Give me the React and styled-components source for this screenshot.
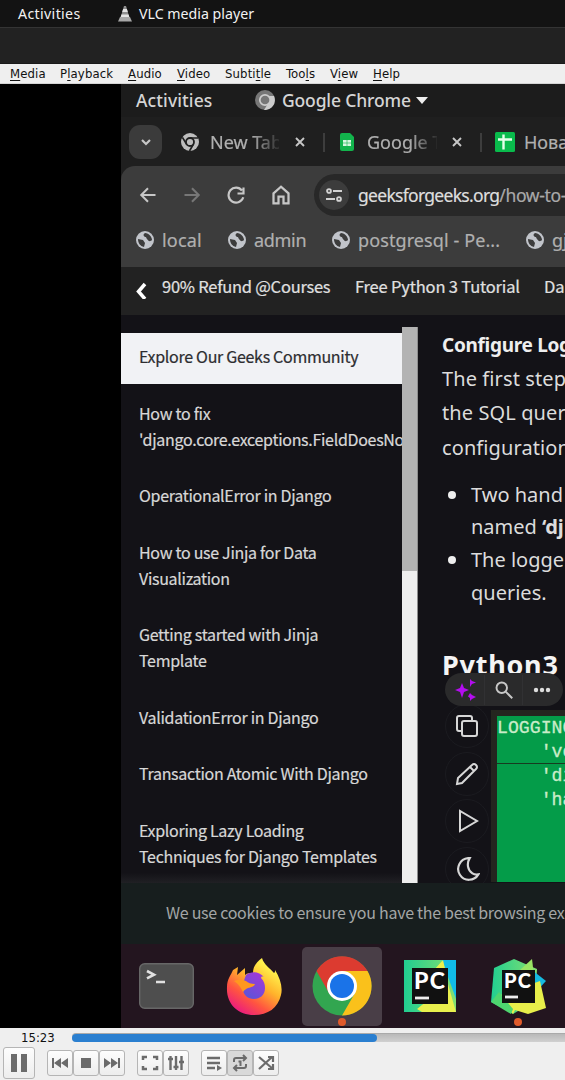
import React from "react";
import styled, { createGlobalStyle } from "styled-components";

const Global = createGlobalStyle`
  *{box-sizing:border-box}
  html,body{margin:0;padding:0;background:#000;overflow:hidden}
  svg{display:block;flex:none}
`;

const ui = '"Noto Sans", sans-serif';
const source = '"Noto Sans CJK SC", "Open Sans", sans-serif';

const Window = styled.div`width:565px;height:1080px;display:flex;flex-direction:column;overflow:hidden;font-family:${ui};white-space:nowrap;`;
const Label = styled.span`
  display:block;flex:none;width:${p => p.$w ? p.$w + "px" : "auto"};
  font-size:${p => p.$size || 14}px;letter-spacing:${p => p.$ls || 0}px;
  color:${p => p.$color || "inherit"};font-weight:${p => p.$weight || 400};
`;
const Spacer = styled.div`flex:none;width:${p => p.$w}px;`;

const DesktopBar = styled.header`flex:none;height:28px;background:#131313;border-bottom:1px solid #343434;color:#f2f2f2;display:flex;align-items:center;padding-left:18px;`;
const TitleBar = styled.div`flex:none;height:36px;background:#222;border-bottom:1px solid #1a1a1a;`;
const MenuBar = styled.nav`flex:none;height:20px;background:#efefef;border-bottom:1px solid #d4d4d4;display:flex;align-items:center;padding-left:10px;color:#111;font-family:"DejaVu Sans Condensed","DejaVu Sans",sans-serif;font-stretch:condensed;`;
const MenuItem = styled.span`flex:none;width:${p => p.$w}px;font-size:13px;line-height:18px;letter-spacing:.12px;u{text-underline-offset:2px;}`;

const Stage = styled.main`flex:none;height:944px;display:flex;background:#000;`;
const Letterbox = styled.div`flex:none;width:121px;`;
const Video = styled.div`flex:none;width:444px;overflow:hidden;display:flex;flex-direction:column;background:#1c1c1c;`;

const ShellBar = styled.div`flex:none;height:33px;display:flex;align-items:center;padding:0 0 1px 15px;color:#d5d5d5;`;
const TabStrip = styled.div`flex:none;height:49px;display:flex;align-items:center;padding:1px 0 0 8px;color:#b0b0b0;background:#1f1f1f;`;
const TabSearch = styled.div`width:33px;height:34px;border-radius:11px;background:#3b3b3b;display:grid;place-items:center;flex:none;`;
const TabTitle = styled(Label)`overflow:hidden;margin-top:-1px;-webkit-text-stroke:.2px currentColor;mask-image:${p => p.$fade ? "linear-gradient(90deg,#000 60%,transparent 105%)" : "none"};`;
const Divider = styled.div`flex:none;width:2px;height:19px;background:#3d3d3d;`;
const BrowserHead = styled.div`flex:none;background:#1f1f1f;`;
const BrowserTools = styled.div`height:101px;background:#3c3c3c;border-radius:14px 0 0 0;`;
const AddressRow = styled.div`height:57px;display:flex;align-items:center;padding-left:18px;`;
const Omnibox = styled.div`flex:none;width:270px;height:42px;border-radius:21px 0 0 21px;background:#282828;display:flex;align-items:center;padding-left:5px;-webkit-text-stroke:.2px currentColor;`;
const SiteInfo = styled.div`flex:none;width:30px;height:30px;border-radius:15px;background:#3c3c3c;display:grid;place-items:center;margin-right:9px;`;
const Bookmarks = styled.div`height:34px;display:flex;align-items:center;padding-left:15px;color:#b0b0b0;-webkit-text-stroke:.2px currentColor;`;

const SiteNav = styled.div`flex:none;height:48px;background:#222;display:flex;align-items:center;padding:0 0 10px 15px;font-family:${source};color:#e0e0e0;-webkit-text-stroke:.2px currentColor;`;
const Page = styled.div`flex:none;height:568px;display:flex;background:#131217;overflow:hidden;`;
const Sidebar = styled.aside`flex:none;width:281px;padding-top:18px;overflow:hidden;font-family:${source};background:linear-gradient(180deg,transparent 98.2%,#202024 100%);`;
const Topic = styled.div`
  padding:${p => p.$active ? "10px 0 15px 18px" : "0 0 0 18px"};
  margin-bottom:${p => p.$active ? 15.5 : 30.5}px;
  background:${p => p.$active ? "#f1f2f5" : "transparent"};
  color:${p => p.$active ? "#2d2d30" : "#d8d8d8"};
  font-size:16px;line-height:26px;letter-spacing:-.3px;
  -webkit-text-stroke:.2px currentColor;
`;
const Track = styled.div`flex:none;width:16px;height:556px;margin-top:12px;background:#eee;border-right:1px solid #8d8d8d;`;
const Thumb = styled.div`height:244px;background:#b3b3b3;`;
const Article = styled.section`flex:none;width:147px;padding:13px 0 0 24px;color:#dcdcdc;`;
const Heading = styled.h4`margin:0;height:34px;line-height:34px;font-size:19px;font-weight:700;letter-spacing:-.3px;color:#eee;`;
const Paragraph = styled.p`margin:0;font-size:20px;line-height:34.3px;letter-spacing:.1px;`;
const List = styled.ul`margin:14px 0 0;padding:0 0 0 29px;font-size:20px;line-height:32.6px;letter-spacing:0;list-style:none;`;
const ListItem = styled.li`display:flex;flex-direction:column;`;
const BulletLine = styled.span`display:flex;align-items:center;&::before{content:"";flex:none;width:8px;height:8px;border-radius:4px;background:#eee;margin:0 15px 0 -23px;}`;
const Snippet = styled.div`position:relative;margin-top:35px;`;
const Language = styled.h3`margin:0;height:44px;line-height:42px;font-size:27px;font-weight:700;letter-spacing:.75px;color:#f4f4f4;`;
const Floating = styled.div`position:absolute;left:3px;top:29px;width:118px;height:33px;border-radius:17px;background:#2a2a2b;display:flex;align-items:center;z-index:2;`;
const FloatAction = styled.div`width:38px;height:30px;display:grid;place-items:center;border-right:1px solid #313133;&:first-child{width:40px}&:last-child{border:0}`;
const CodeArea = styled.div`display:flex;height:200px;margin-top:27px;`;
const CodeTools = styled.div`flex:none;width:49px;padding-left:3px;margin-top:-11px;display:flex;flex-direction:column;gap:3.6px;`;
const CodeTool = styled.div`flex:none;width:44px;height:44px;border-radius:22px;border:1px solid #1b1b20;display:grid;place-items:center;`;
const CodeFrame = styled.div`flex:none;width:76px;height:172px;border:6px solid #24251f;border-right:0;border-bottom:0;margin-top:-5px;`;
const Code = styled.div`height:166px;background:#049c49;color:#c9ecc8;font:18.2px/24px "Liberation Mono",monospace;overflow:hidden;white-space:pre;-webkit-text-stroke:.3px currentColor;`;
const CodeLine = styled.div`height:24px;border-bottom:${p => p.$rule ? "1px solid #173b20" : "0"};`;

const Cookies = styled.div`flex:none;height:61px;background:#171e1e;color:#a3a6a6;display:flex;align-items:center;padding:0 0 3px 45px;font-family:${source};`;
const Dock = styled.div`flex:none;height:84px;background:#23151f;display:flex;align-items:center;`;
const DockItem = styled.div`position:relative;flex:none;width:80px;height:79px;margin-right:8px;display:grid;place-items:center;border-radius:5px;background:${p => p.$active ? "#493e47" : "transparent"};`;
const RunningDot = styled.i`position:absolute;left:36px;bottom:0;width:8px;height:8px;border-radius:4px;background:#e05a2b;`;

const Controls = styled.footer`flex:none;height:52px;background:#efefef;color:#111;`;
const SeekRow = styled.div`height:18px;display:flex;align-items:center;padding-left:21px;font-family:"DejaVu Sans Condensed","DejaVu Sans",sans-serif;font-stretch:condensed;`;
const Seek = styled.div`width:520px;height:9px;background:linear-gradient(#b9b9b9,#d0d0d0);border-top:1px solid #aaa;border-radius:4px 0 0 4px;`;
const Played = styled.div`width:305px;height:8px;background:#2a7fd0;border-radius:4px;`;
const ButtonRow = styled.div`height:34px;display:flex;align-items:center;padding:0 0 1px 3px;`;
const Group = styled.div`display:flex;gap:0;margin-left:12px;`;
const Button = styled.button`flex:none;width:${p => p.$large ? 32 : 26}px;height:${p => p.$large ? 32 : 26}px;padding:0;border:1px solid #b5b5b5;border-radius:3px;background:${p => p.$pressed ? "#d9d9d9" : "linear-gradient(#fdfdfd,#ededed)"};display:grid;place-items:center;`;

const Stroke = ({ size = 20, color = "#c7c7c7", w = 2, d, vb = 24, fill = "none" }) => (
  <svg width={size} height={size} viewBox={`0 0 ${vb} ${vb}`} fill={fill} stroke={color} strokeWidth={w}><path d={d} /></svg>
);
const Cone = () => <svg width="14" height="16" viewBox="0 0 14 16"><path d="M6 0h2l3.6 12H2.4z" fill="#8f8f8f"/><path d="M5.1 3h3.8l.9 3H4.2zM3.4 8.6h7.2l.7 2.4H2.7z" fill="#e4e4e4"/><path d="M2 11h10l2 4.5H0z" fill="#a8a8a8"/></svg>;
const GrayChrome = () => <svg width="20" height="20" viewBox="0 0 20 20"><circle cx="10" cy="10" r="10" fill="#777"/><path d="M10 6h9a10 10 0 0 1-10 14l5-8z" fill="#ccc"/><circle cx="10" cy="10" r="5.2" fill="#777" stroke="#ccc" strokeWidth="1.7"/></svg>;
const TabChrome = () => <svg width="18" height="18" viewBox="0 0 18 18"><circle cx="9" cy="9" r="9" fill="#bebebe"/><path d="M9 5h8M5.5 11L1.4 4.4M12.5 11L8.5 18" stroke="#202020" strokeWidth="1.7"/><circle cx="9" cy="9" r="4" fill="#bebebe" stroke="#202020" strokeWidth="1.8"/></svg>;
const Globe = () => <svg width="18" height="18" viewBox="0 0 18 18"><circle cx="9" cy="9" r="9" fill="#c1c4ca"/><path d="M2 8l5 1 2 3-1 4C4 15 2 12 2 8zM9 2c-2 1-2 3 0 4 2 0 1 2 3 3 1 2 3 1 4 0 0-3-3-7-7-7z" fill="#3c3c3c"/></svg>;
const Close = () => <Stroke size={12} vb={12} w={1.9} d="M2 2l8 8M10 2L2 10" />;
const Sheets = () => <svg width="14" height="18" viewBox="0 0 14 18"><path d="M0 2a2 2 0 0 1 2-2h8l4 4v12a2 2 0 0 1-2 2H2a2 2 0 0 1-2-2z" fill="#12b44c"/><path d="M3 7h8v6H3z" fill="#d5f7df"/><path d="M3 10h8M7 7v6" stroke="#12b44c" strokeWidth=".6"/></svg>;
const GreenTable = () => <svg width="20" height="20" viewBox="0 0 20 20"><rect width="20" height="20" rx="1.5" fill="#09bb4c"/><path d="M8.5 2.5v15M3 7.5h14" stroke="#e4ffe9" strokeWidth="2.4"/></svg>;
const Tune = () => <svg width="16" height="16" viewBox="0 0 16 16" fill="none" stroke="#d2d2d2" strokeWidth="1.9"><circle cx="3" cy="4" r="1.9"/><circle cx="13" cy="12" r="1.9"/><path d="M7 4h9M0 12h9"/></svg>;

const Terminal = () => <svg width="55" height="46" viewBox="0 0 55 46"><rect x=".7" y=".7" width="53.6" height="44.6" rx="5" fill="#4e4e4e" stroke="#676767" strokeWidth="1.4"/><path d="M8 8l7 3.7L8 15.4M17 19h9" fill="none" stroke="#e1e1e1" strokeWidth="2.6"/></svg>;
const Firefox = () => (
  <svg width="56" height="59" viewBox="0 0 56 59">
    <defs>
      <linearGradient id="ff" x1=".85" y1=".1" x2=".25" y2="1"><stop offset=".1" stopColor="#fff04b"/><stop offset=".4" stopColor="#ffb32b"/><stop offset=".7" stopColor="#ff5540"/><stop offset="1" stopColor="#e91784"/></linearGradient>
      <linearGradient id="pu" x1=".8" y1="0" x2=".2" y2="1"><stop stopColor="#a437d8"/><stop offset="1" stopColor="#5a55d8"/></linearGradient>
    </defs>
    <path d="M36 1c2 7 8 10 12 15 1-1 1-1 1-3 5 8 8 17 6 25C52 51 42 58 28 58 12 58 0 47 1 30c0-8 4-12 6-17l5-3-1 8 8-7v7c2-2 5-2 8-2 0-7 4-11 9-15z" fill="url(#ff)"/>
    <path d="M20 18c5-4 13-4 18 2-2-1-3 0-3 1 3 3 4 6 4 10 0 7-5 11-11 11S17 38 17 32c0-5 1-9 3-14z" fill="url(#pu)"/>
    <path d="M8 24c4-2 8-2 12 0 2 2 5 3 9 3-1 3-4 3-7 4-2 1-4 2-5 4-2-4-4-8-9-11z" fill="#ff981f"/>
  </svg>
);
const Chrome = () => <svg width="60" height="60" viewBox="0 0 60 60"><circle cx="30" cy="30" r="29.5" fill="#32a650"/><path d="M4.5 15A29.5 29.5 0 0 1 55.5 15H30L17 37z" fill="#dc3b30"/><path d="M30 15h25.5A29.5 29.5 0 0 1 30 59.5L43 37z" fill="#fac11b"/><circle cx="30" cy="30" r="15" fill="#fff"/><circle cx="30" cy="30" r="12" fill="#1a73e8"/></svg>;
const PcText = styled.text`font-family:Lato,sans-serif;font-weight:900;fill:#fff;`;
const PyCharm = ({ community }) => (
  <svg width="56" height="56" viewBox="0 0 56 56">
    <defs><linearGradient id="gr" x1="0" x2="1"><stop stopColor="#21ce91"/><stop offset="1" stopColor="#83df70"/></linearGradient></defs>
    {community ? <>
      <path d="M4 10L24 1l23 10-2 32-22 13L1 44z" fill="url(#gr)"/><path d="M30 12L42 1l3 25z" fill="#9ae564"/><path d="M42 12l14 11-13 14z" fill="#15b9df"/><path d="M8 38l42-15 6 27-18 6-13-4-2 4z" fill="#e8ef4a"/><path d="M1 44l8-10 14 17-2 5z" fill="#4ed66f"/>
    </> : <>
      <path d="M2 2h52v52H2z" fill="url(#gr)"/><path d="M40 2h14v39z" fill="#11bce8"/><path d="M32 12l9-10 4 17zM15 51l31-25 8 28H20z" fill="#e9f04d"/>
    </>}
    <rect x={community ? 12 : 10} y={community ? 12 : 10} width={community ? 33 : 36} height={community ? 33 : 36} fill="#111"/>
    <PcText x={community ? 14 : 12} y={community ? 30 : 31} fontSize={community ? 20 : 23} textLength={community ? 27 : 31}>PC</PcText>
    <path d={community ? "M15 39h13" : "M13 40h14"} stroke="#eee" strokeWidth="2.8"/>
  </svg>
);

const menu = [["", "M", "edia", 50], ["P", "l", "ayback", 68], ["", "A", "udio", 49], ["", "V", "ideo", 48], ["Subti", "t", "le", 61], ["Too", "l", "s", 44], ["V", "i", "ew", 43], ["", "H", "elp", 40]];
const topics = [["How to fix", "'django.core.exceptions.FieldDoesNo"], ["OperationalError in Django"], ["How to use Jinja for Data", "Visualization"], ["Getting started with Jinja", "Template"], ["ValidationError in Django"], ["Transaction Atomic With Django"], ["Exploring Lazy Loading", "Techniques for Django Templates"]];

const C = ({ d, size = 18, w = 2.5, fill = "none" }) => <Stroke size={size} vb={18} color="#6b6b6b" w={w} d={d} fill={fill} />;

export default function App() {
  return (
    <Window>
      <Global />
      <DesktopBar><Label $w={100} $size={14.2} $ls={.35}>Activities</Label><Cone /><Spacer $w={7} /><Label $size={14.2}>VLC media player</Label></DesktopBar>
      <TitleBar />
      <MenuBar>{menu.map(([a, b, c, w]) => <MenuItem key={a + b + c} $w={w}>{a}<u>{b}</u>{c}</MenuItem>)}</MenuBar>
      <Stage>
        <Letterbox />
        <Video>
          <ShellBar><Label $w={119} $size={17.5} $ls={.1} $weight={500}>Activities</Label><GrayChrome /><Spacer $w={7} /><Label $w={134} $size={17.5} $ls={-.15} $weight={500}>Google Chrome</Label><svg width="12" height="7"><path d="M0 0h12L6 7z" fill="#eee" /></svg></ShellBar>
          <TabStrip>
            <TabSearch><Stroke size={12} vb={12} w={2.2} d="M2 4l4 4 4-4" /></TabSearch><Spacer $w={19} /><TabChrome /><Spacer $w={11} />
            <TabTitle $w={69} $size={18} $fade>New Tab</TabTitle><Spacer $w={15} /><Close /><Spacer $w={17} /><Divider /><Spacer $w={15} /><Sheets /><Spacer $w={13} />
            <TabTitle $w={70} $size={18} $fade>Google T</TabTitle><Spacer $w={14} /><Close /><Spacer $w={17} /><Divider /><Spacer $w={13} /><GreenTable /><Spacer $w={9} /><TabTitle $size={18}>Нова</TabTitle>
          </TabStrip>
          <BrowserHead><BrowserTools>
            <AddressRow>
              <Stroke size={18} w={2.7} d="M22 12H3M12 3l-9 9 9 9" /><Spacer $w={26} /><Stroke size={18} color="#777" w={2.7} d="M2 12h19M12 3l9 9-9 9" /><Spacer $w={26} />
              <Stroke size={18} w={2.9} d="M20 6A10 10 0 1 0 21.7 15M22 2v8h-8" /><Spacer $w={26} /><Stroke size={20} w={2.7} d="M3 10l9-8 9 8v12h-6v-8H9v8H3z" /><Spacer $w={23} />
              <Omnibox><SiteInfo><Tune /></SiteInfo><Label $size={17.5} $ls={-.7} $color="#dedede">geeksforgeeks.org</Label><Label $size={17.5} $ls={-.35} $color="#aaa">/how-to-</Label></Omnibox>
            </AddressRow>
            <Bookmarks><Globe /><Spacer $w={8} /><Label $w={66} $size={18} $ls={.2}>local</Label><Globe /><Spacer $w={8} /><Label $w={78} $size={18} $ls={-.3}>admin</Label><Globe /><Spacer $w={8} /><Label $w={168} $size={18} $ls={.1}>postgresql - Pe...</Label><Globe /><Spacer $w={8} /><Label $size={18}>gj</Label></Bookmarks>
          </BrowserTools></BrowserHead>
          <SiteNav><svg width="11" height="25" viewBox="0 0 11 25"><path d="M9 10L2.5 17.5 9 25" fill="none" stroke="#fff" strokeWidth="3.5" /></svg><Spacer $w={15} /><Label $w={193} $size={16.5} $ls={-.25}>90% Refund @Courses</Label><Label $w={189} $size={16.5} $ls={-.18}>Free Python 3 Tutorial</Label><Label $size={16.5}>Da</Label></SiteNav>
          <Page>
            <Sidebar><Topic $active>Explore Our Geeks Community</Topic>{topics.map(t => <Topic key={t[0]}>{t.map(x => <div key={x}>{x}</div>)}</Topic>)}</Sidebar>
            <Track><Thumb /></Track>
            <Article>
              <Heading>Configure Log</Heading>
              <Paragraph>The first step<br />the SQL quer<br />configuration</Paragraph>
              <List><ListItem><BulletLine>Two hand</BulletLine><span>named <b>‘dj</b></span></ListItem><ListItem><BulletLine>The logge</BulletLine><span>queries.</span></ListItem></List>
              <Snippet>
                <Language>Python3</Language>
                <Floating>
                  <FloatAction><svg width="22" height="22" viewBox="0 0 22 22" fill="#b40df0"><path d="M8 4l2 5 5 2-5 2-2 6-2-6-5-2 5-2zM16 0l2 2 4 1.500-4 1.500-2 3v-4zM16 14l2 2 4 2-4 2-2 2v-3l-2-1.500z" /></svg></FloatAction>
                  <FloatAction><Stroke size={18} w={2.6} d="M14.5 14.5L23 23M16 9A7 7 0 1 1 2 9a7 7 0 0 1 14 0" /></FloatAction>
                  <FloatAction><svg width="18" height="6" fill="#ddd"><circle cx="3" cy="3" r="2.2" /><circle cx="9" cy="3" r="2.2" /><circle cx="15" cy="3" r="2.2" /></svg></FloatAction>
                </Floating>
                <CodeArea>
                  <CodeTools>
                    <CodeTool><Stroke size={24} color="#d7d7d7" d="M9 7h11a2 2 0 0 1 2 2v11a2 2 0 0 1-2 2H9a2 2 0 0 1-2-2V9a2 2 0 0 1 2-2zM7 17H4a2 2 0 0 1-2-2V4a2 2 0 0 1 2-2h11a2 2 0 0 1 2 2v3" /></CodeTool>
                    <CodeTool><Stroke size={24} color="#d7d7d7" d="M2 22l1-6L17 3q2-2 4 0t0 4L7 21zM15 5l4 4" /></CodeTool>
                    <CodeTool><Stroke size={24} color="#d7d7d7" d="M5 2v20l17-10z" /></CodeTool>
                    <CodeTool><Stroke size={26} color="#d7d7d7" d="M13 2A10 10 0 1 0 22.5 17C20 17.500 18.500 17 17 16C12.500 13 11.500 7 14.500 2z" /></CodeTool>
                  </CodeTools>
                  <CodeFrame><Code><CodeLine>LOGGING</CodeLine><CodeLine $rule>{"    've"}</CodeLine><CodeLine>{"    'di"}</CodeLine><CodeLine>{"    'ha"}</CodeLine></Code></CodeFrame>
                </CodeArea>
              </Snippet>
            </Article>
          </Page>
          <Cookies><Label $size={16} $ls={-.28}>We use cookies to ensure you have the best browsing ex</Label></Cookies>
          <Dock>
            <Spacer $w={5} /><DockItem><Terminal /></DockItem><DockItem><Firefox /></DockItem><DockItem $active><Chrome /><RunningDot /></DockItem><DockItem><PyCharm /></DockItem><DockItem><PyCharm community /><RunningDot /></DockItem>
          </Dock>
        </Video>
      </Stage>
      <Controls>
        <SeekRow><Label $w={51} $size={13}>15:23</Label><Seek><Played /></Seek></SeekRow>
        <ButtonRow>
          <Button $large><svg width="16" height="18" fill="#6b6b6b"><path d="M0 0h6v18H0zM10 0h6v18h-6z" /></svg></Button>
          <Group>
            <Button><C fill="#6b6b6b" w={0} d="M1 4h2v10H1zM3 9l7-5v10zM10 9l7-5v10z" /></Button>
            <Button><C fill="#6b6b6b" w={0} d="M4 4h10v10H4z" /></Button>
            <Button><C fill="#6b6b6b" w={0} d="M1 4l7 5-7 5zM8 4l7 5-7 5zM15 4h2v10h-2z" /></Button>
          </Group>
          <Group>
            <Button><C d="M2 6V3h4M12 3h4v3M2 12v3h4M12 15h4v-3" /></Button>
            <Button><C w={2.4} d="M3.5 2v14M1 5h5M9 2v14M6.5 13h5M14.5 2v14M12 8h5" /></Button>
          </Group>
          <Group>
            <Button><svg width="18" height="18" viewBox="0 0 18 18"><path d="M2 4h13M2 9h13M2 14h8" stroke="#6b6b6b" strokeWidth="2.3" /><path d="M12 11l5 3-5 3z" fill="#6b6b6b" /></svg></Button>
            <Button $pressed><C w={2} d="M3 8V6q0-2 2-2h10M12 1l3 3-3 3M15 10v2q0 2-2 2H3M6 11l-3 3 3 3M7.500 7.500h2V12" /></Button>
            <Button><C w={2.2} d="M2 3l14 12M2 15L15 3M11 3h5v5M11 15h5v-5" /></Button>
          </Group>
        </ButtonRow>
      </Controls>
    </Window>
  );
}
